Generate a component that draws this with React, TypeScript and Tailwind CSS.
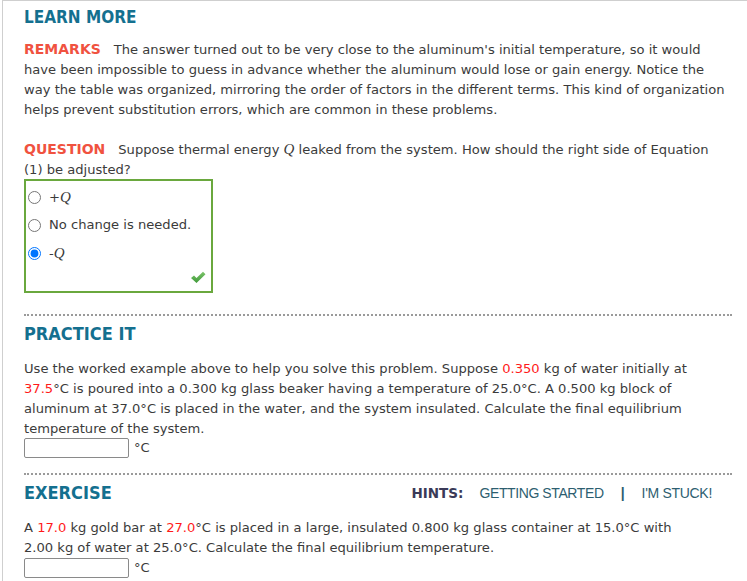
import React from "react";

const body = "font-['DejaVu_Sans',Verdana,sans-serif] text-[13.1px] leading-[20px] text-[#3b3b3b]";

function Radio({ checked }: { checked?: boolean }) {
  return (
    <input
      type="radio"
      checked={!!checked}
      readOnly
      className="m-0 w-[13px] h-[13px] accent-[#0075ff]"
    />
  );
}

function Q({ sign }: { sign: string }) {
  return (
    <span>
      {sign}
      <span className="font-['Liberation_Serif',serif] italic text-[15px]">Q</span>
    </span>
  );
}

function Check() {
  return (
    <svg width="16" height="13" viewBox="0 0 16 13">
      <defs>
        <linearGradient id="g" x1="0" y1="0" x2="0" y2="1">
          <stop offset="0" stopColor="#7cc46a" />
          <stop offset="1" stopColor="#3f9a3a" />
        </linearGradient>
      </defs>
      <path d="M1 7 L4 4.5 L6.5 7 L13 0.8 L15.5 3.2 L6.5 12 Z" fill="url(#g)" />
    </svg>
  );
}

function Heading({ children }: { children: React.ReactNode }) {
  return (
    <div className="font-['DejaVu_Sans_Condensed','DejaVu_Sans',sans-serif] font-bold text-[18px] leading-[20px] text-[#14708f]">
      {children}
    </div>
  );
}

function Answer() {
  return (
    <div className="flex items-center gap-[5px] h-[20px]">
      <div className="w-[105px] h-[20px] border border-[#8a8a8a] rounded-[2px] bg-white" />
      <span>°C</span>
    </div>
  );
}

const Red = ({ children }: { children: React.ReactNode }) => <span className="text-[#ff1a1a]">{children}</span>;

export default function App() {
  return (
    <div className="w-[747px] h-[581px] bg-white overflow-hidden">
      <div className={`ml-[2px] h-full border-l border-t border-[#cfcfcf] pl-[21px] pr-[15px] whitespace-nowrap ${body}`}>
        <div className="pt-[6px]">
          <div className="font-['DejaVu_Sans_Condensed','DejaVu_Sans',sans-serif] font-bold text-[17px] leading-[20px] text-[#14708f]">
            LEARN MORE
          </div>
        </div>
        <p className="mt-[12px]">
          <span className="font-bold text-[14px] text-[#f0523f] mr-[13px]">REMARKS</span>
          The answer turned out to be very close to the aluminum's initial temperature, so it would
          <br />
          have been impossible to guess in advance whether the aluminum would lose or gain energy. Notice the
          <br />
          way the table was organized, mirroring the order of factors in the different terms. This kind of organization
          <br />
          helps prevent substitution errors, which are common in these problems.
        </p>
        <p className="mt-[19px]">
          <span className="font-bold text-[14px] text-[#f0523f] mr-[13px]">QUESTION</span>
          Suppose thermal energy{" "}
          <span className="font-['Liberation_Serif',serif] italic text-[15px]">Q</span> leaked from the system. How
          should the right side of Equation
          <br />
          (1) be adjusted?
        </p>
        <div className="-mt-[1px] w-[189px] h-[114px] border-2 border-[#6aa83e] flex flex-col relative">
          <div className="flex flex-col gap-[8px] pt-[6px] pl-[2px]">
            <label className="flex items-center gap-[8px] h-[20px]">
              <Radio /> <Q sign="+" />
            </label>
            <label className="flex items-center gap-[8px] h-[20px]">
              <Radio /> <span>No change is needed.</span>
            </label>
            <label className="flex items-center gap-[8px] h-[20px]">
              <Radio checked /> <Q sign="-" />
            </label>
          </div>
          <div className="absolute right-[5px] bottom-[7px]">
            <Check />
          </div>
        </div>

        <div className="mt-[21px] border-t-2 border-dotted border-[#9a9a9a]" />
        <div className="mt-[8px]">
          <Heading>PRACTICE IT</Heading>
        </div>
        <p className="mt-[15px]">
          Use the worked example above to help you solve this problem. Suppose <Red>0.350</Red> kg of water initially at
          <br />
          <Red>37.5</Red>°C is poured into a 0.300 kg glass beaker having a temperature of 25.0°C. A 0.500 kg block of
          <br />
          aluminum at 37.0°C is placed in the water, and the system insulated. Calculate the final equilibrium
          <br />
          temperature of the system.
        </p>
        <div className="-mt-[1px]">
          <Answer />
        </div>

        <div className="mt-[15px] border-t-2 border-dotted border-[#9a9a9a]" />
        <div className="mt-[8px] flex items-center justify-between pr-[20px]">
          <Heading>EXERCISE</Heading>
          <div className="flex items-center h-[20px]">
            <span className="font-bold text-[13.5px] text-[#3a3a58] mr-[16px]">HINTS:</span>
            <span className="font-['Liberation_Sans',Arial,sans-serif] text-[14px] text-[#2d5e70] tracking-[-0.4px]">
              GETTING STARTED
            </span>
            <span className="font-['Liberation_Sans',Arial,sans-serif] font-bold text-[14px] text-[#2d5e70] mx-[17px]">
              |
            </span>
            <span className="font-['Liberation_Sans',Arial,sans-serif] text-[14px] text-[#2d5e70] tracking-[-0.3px]">
              I'M STUCK!
            </span>
          </div>
        </div>
        <p className="mt-[15px]">
          A <Red>17.0</Red> kg gold bar at <Red>27.0</Red>°C is placed in a large, insulated 0.800 kg glass container at
          15.0°C with
          <br />
          2.00 kg of water at 25.0°C. Calculate the final equilibrium temperature.
        </p>
        <Answer />
      </div>
    </div>
  );
}
